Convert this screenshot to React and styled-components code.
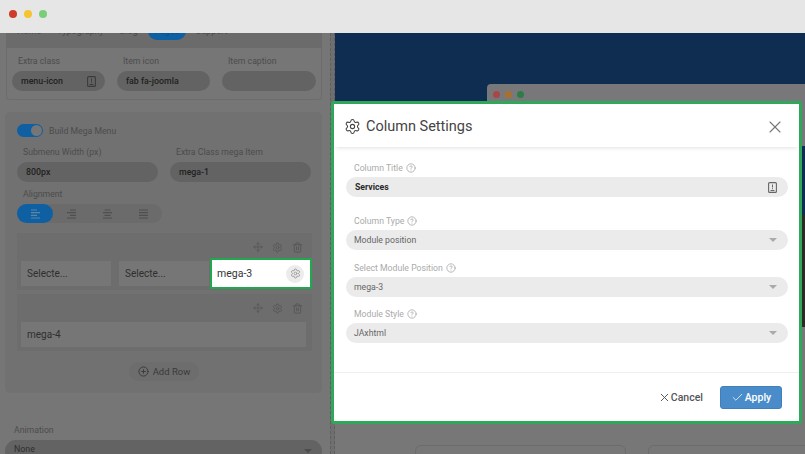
import React from 'react';
import styled, { createGlobalStyle } from 'styled-components';
import { Settings, X, Check, CircleHelp, CirclePlus, Move, Trash2 } from 'lucide-react';

const Global = createGlobalStyle`
    html, body { margin: 0; padding: 0; background: #767676; }
    * { box-sizing: border-box; }
    body { font-family: Roboto, "Liberation Sans", sans-serif; }
`;

const Page = styled.div`
    position: relative;
    width: 805px;
    height: 454px;
    overflow: hidden;
    display: flex;
    flex-direction: column;
`;

const TitleBar = styled.div`
    flex: 0 0 33px;
    display: flex;
    align-items: center;
    gap: 7px;
    padding: 0 0 5px 9px;
    background: #e6e6e6;
    position: relative;
    z-index: 2;
`;

const Dot = styled.span`
    width: ${p => p.$size || 8}px;
    height: ${p => p.$size || 8}px;
    border-radius: 50%;
    background: ${p => p.$color};
`;

const Body = styled.div`
    flex: 1;
    display: flex;
    min-height: 0;
`;

const Sidebar = styled.div`
    flex: 0 0 330px;
    padding: 0 8px 0 5px;
    background: #767676;
    display: flex;
    flex-direction: column;
    overflow: hidden;
    & > * { flex-shrink: 0; }
`;

const Tabs = styled.div`
    height: 15px;
    margin: 0 0 0 1px;
    padding: 0 0 0 11px;
    background: #6b6b6b;
    display: flex;
    align-items: flex-start;
    gap: 16px;
    font-size: 9px;
    color: #4a4a4a;
    overflow: hidden;
`;

const Tab = styled.span`
    height: 9px;
    margin: -2px ${p => (p.$active ? '-6px' : '0')} 0;
    padding: 0 ${p => (p.$active ? '6.5px' : '0')};
    line-height: 0;
    color: ${p => (p.$active ? '#0b4f8a' : '#4a4a4a')};
    background: ${p => (p.$active ? '#0f5fa3' : 'transparent')};
    border-radius: 0 0 14px 14px;
`;

const TopPanel = styled.div`
    height: 52px;
    margin-left: 1px;
    padding: 7px 5px 0;
    display: grid;
    grid-template-columns: 93px 93px 94px;
    column-gap: 12px;
    border: 1px solid #6c6c6c;
    border-top: 0;
    border-radius: 0 0 4px 4px;
`;

const Field = styled.div`
    display: flex;
    flex-direction: column;
    margin-top: ${p => p.$mt || 0}px;
`;

const DimLabel = styled.label`
    height: 16px;
    padding-left: ${p => p.$indent || 6}px;
    font-size: 8.7px;
    line-height: 12px;
    color: #4c4c4c;
`;

const DimInput = styled.div`
    height: 20px;
    border-radius: 10px;
    background: #636363;
    padding: 0 ${p => p.$pad || 9}px;
    display: flex;
    align-items: center;
    justify-content: space-between;
    font-size: 8.8px;
    font-weight: 500;
    color: #1f1f1f;
`;

const MainPanel = styled.div`
    height: 281px;
    margin-top: 12px;
    padding: 12px 11px 0 12px;
    background: #717171;
    border-radius: 5px;
    display: flex;
    flex-direction: column;
    & > * { flex-shrink: 0; }
`;

const ToggleRow = styled.div`
    display: flex;
    align-items: center;
    gap: 6px;
    height: 13px;
    font-size: 8.7px;
    color: #4c4c4c;
`;

const Toggle = styled.span`
    width: 26px;
    height: 13px;
    border-radius: 7px;
    background: #0f5fa3;
    display: flex;
    justify-content: flex-end;
    align-items: center;
    padding-right: 1px;
    &::after {
        content: '';
        width: 11px;
        height: 11px;
        border-radius: 50%;
        background: #767676;
    }
`;

const TwoCols = styled.div`
    margin-top: 9px;
    display: grid;
    grid-template-columns: 141px 141px;
    column-gap: 12px;
`;

const AlignGroup = styled.div`
    width: 145px;
    height: 19px;
    border-radius: 10px;
    background: #6b6b6b;
    display: flex;
`;

const AlignBtn = styled.span`
    flex: 0 0 36px;
    display: flex;
    align-items: center;
    justify-content: center;
    border-radius: 10px;
    color: ${p => (p.$active ? '#5c86a8' : '#4f4f4f')};
    background: ${p => (p.$active ? '#0f5fa3' : 'transparent')};
`;

const RowBox = styled.div`
    width: 295px;
    height: 57px;
    margin-top: ${p => p.$mt}px;
    padding: 4px 6px 4px 4px;
    background: #6d6d6d;
    display: flex;
    flex-direction: column;
`;

const RowTools = styled.div`
    height: 20px;
    margin-bottom: 4px;
    display: flex;
    align-items: center;
    justify-content: flex-end;
    gap: 9px;
    padding-right: 3px;
    color: #575757;
`;

const Cells = styled.div`
    display: flex;
    gap: 8px;
    align-items: center;
    height: 25px;
`;

const Cell = styled.div`
    flex: ${p => (p.$wide ? 1 : '0 0 90px')};
    height: 25px;
    padding-left: 6px;
    background: #767676;
    display: flex;
    align-items: center;
    font-size: 10px;
    color: #2f2f2f;
`;

const ActiveCell = styled.div`
    flex: 0 0 102px;
    height: 31px;
    margin-left: -7px;
    padding: 0 6px 0 5px;
    background: #fff;
    border: 2px solid #21a84f;
    display: flex;
    align-items: center;
    justify-content: space-between;
    font-size: 10.5px;
    color: #333;
`;

const GearBubble = styled.span`
    width: 18px;
    height: 18px;
    border-radius: 50%;
    background: #ececec;
    color: #999;
    display: flex;
    align-items: center;
    justify-content: center;
`;

const AddRow = styled.div`
    align-self: center;
    width: 70px;
    height: 19px;
    margin-top: 11px;
    border-radius: 10px;
    background: #6d6d6d;
    display: flex;
    align-items: center;
    justify-content: center;
    gap: 4px;
    font-size: 9.5px;
    color: #3a3a3a;
`;

const Animation = styled.div`
    margin-top: 31px;
    display: flex;
    flex-direction: column;
`;

const DimSelect = styled.div`
    height: 22px;
    border-radius: 11px;
    background: #636363;
    padding: 0 10px 0 9px;
    display: flex;
    align-items: flex-start;
    justify-content: space-between;
    font-size: 8.8px;
    line-height: 19px;
    color: #2f2f2f;
`;

const Caret = styled.span`
    flex: none;
    align-self: center;
    width: 0;
    height: 0;
    border-left: 4px solid transparent;
    border-right: 4px solid transparent;
    border-top: 4px solid ${p => p.$color || '#aaa'};
`;

const Divider = styled.div`
    flex: 0 0 5px;
    background: #6f6f6f;
    border-left: 1px dashed #5e5e5e;
    border-right: 1px dashed #5e5e5e;
`;

const Preview = styled.div`
    flex: 1;
    background: #777;
    display: flex;
    flex-direction: column;
`;

const Hero = styled.div`
    flex: 0 0 300px;
    padding: 51px 0 0 152px;
    background: #0f2d50;
`;

const InnerWindow = styled.div`
    height: 249px;
    border-radius: 4px 0 0 0;
    background: #78787a;
    overflow: hidden;
`;

const InnerBar = styled.div`
    height: 62px;
    padding: 7px 0 0 6px;
    display: flex;
    gap: 5px;
`;

const InnerBlue = styled.div`
    height: 69px;
    background: #0f2d50;
`;

const InnerPhoto = styled.div`
    height: 112px;
    background: #2b2a24;
`;

const CardRow = styled.div`
    margin-top: 112px;
    padding-left: 80px;
    display: flex;
    gap: 22px;
`;

const GhostCard = styled.div`
    flex: none;
    width: ${p => p.$w}px;
    height: 20px;
    border: 1px solid #6c6c6c;
    border-radius: 6px;
`;

const Modal = styled.div`
    position: absolute;
    left: 331px;
    top: 101px;
    width: 471px;
    height: 323px;
    background: #fff;
    border: 3px solid #2fa85a;
    border-radius: 3px;
    display: flex;
    flex-direction: column;
    z-index: 3;
`;

const ModalHead = styled.div`
    flex: 0 0 43px;
    padding: 2px 14px 0 10px;
    display: flex;
    align-items: center;
    gap: 5px;
    color: #444;
    box-shadow: 0 3px 4px -2px rgba(0, 0, 0, 0.12);
`;

const ModalTitle = styled.h3`
    margin: 0;
    flex: 1;
    font-size: 14.5px;
    font-weight: 400;
`;

const ModalBody = styled.div`
    flex: 0 0 226px;
    padding: 14px 11px 0 12px;
    display: flex;
    flex-direction: column;
    border-bottom: 1px solid #eee;
`;

const FormRow = styled.div`
    margin-bottom: ${p => p.$mb}px;
`;

const FormLabel = styled.label`
    height: 16px;
    padding: 0 0 3px 8px;
    display: flex;
    align-items: center;
    gap: 3px;
    font-size: 8.7px;
    color: #aaa;
`;

const FormControl = styled.div`
    height: 20px;
    border-radius: 10px;
    background: #ebebeb;
    padding: 0 11px 0 ${p => (p.$strong ? 9 : 8)}px;
    display: flex;
    align-items: center;
    justify-content: space-between;
    font-size: 8.7px;
    line-height: 22px;
    font-weight: ${p => (p.$strong ? 700 : 400)};
    color: ${p => (p.$strong ? '#2a2a2a' : '#666')};
`;

const ModalFoot = styled.div`
    flex: 1;
    padding: 0 17px 0 0;
    display: flex;
    align-items: center;
    justify-content: flex-end;
    gap: 17px;
`;

const CancelBtn = styled.span`
    display: flex;
    align-items: center;
    font-size: 10.5px;
    font-weight: 500;
    color: #555;
`;

const ApplyBtn = styled.span`
    width: 62px;
    height: 23px;
    border-radius: 3px;
    background: #4a8cca;
    border: 1px solid #3f7fbd;
    display: flex;
    align-items: center;
    justify-content: center;
    gap: 1px;
    font-size: 10.5px;
    font-weight: 500;
    color: #fff;
`;

const KeyIcon = ({ color }) => (
    <svg width="9" height="11" viewBox="0 0 9 11" fill="none">
        <rect x="0.6" y="0.6" width="7.8" height="9.8" rx="1" stroke={color} strokeWidth="1.1" />
        <path d="M4.5 2.5v3M4.5 6.2v1M2.5 8.5h4" stroke={color} strokeWidth="1" />
    </svg>
);

// four bars, as in the font-awesome align glyphs
const alignBars = {
    left: 'M0 1h6M0 3.7h9M0 6.3h6M0 9h9',
    right: 'M3 1h6M0 3.7h9M3 6.3h6M0 9h9',
    center: 'M1.5 1h6M0 3.7h9M1.5 6.3h6M0 9h9',
    justify: 'M0 1h9M0 3.7h9M0 6.3h9M0 9h9',
};

const AlignIcon = ({ side }) => (
    <svg width="9" height="10" viewBox="0 0 9 10" fill="none" stroke="currentColor" strokeWidth="1.2">
        <path d={alignBars[side]} />
    </svg>
);

const RowToolbar = () => (
    <RowTools>
        <Move size={10} />
        <Settings size={11} />
        <Trash2 size={11} />
    </RowTools>
);

const formFields = [
    { label: 'Column Type', value: 'Module position', mb: 11 },
    { label: 'Select Module Position', value: 'mega-3', mb: 10 },
    { label: 'Module Style', value: 'JAxhtml', mb: 0 },
];

const App = () => (
    <Page>
        <Global />
        <TitleBar>
            <Dot $color="#cf3a2c" />
            <Dot $color="#f5c431" />
            <Dot $color="#78cf78" />
        </TitleBar>
        <Body>
            <Sidebar>
                <Tabs>
                    <Tab>Home</Tab>
                    <Tab>Typography</Tab>
                    <Tab>Blog</Tab>
                    <Tab $active>Pages</Tab>
                    <Tab>Support</Tab>
                </Tabs>
                <TopPanel>
                    <Field>
                        <DimLabel>Extra class</DimLabel>
                        <DimInput>menu-icon <KeyIcon color="#3c3c3c" /></DimInput>
                    </Field>
                    <Field>
                        <DimLabel>Item icon</DimLabel>
                        <DimInput>fab fa-joomla</DimInput>
                    </Field>
                    <Field>
                        <DimLabel>Item caption</DimLabel>
                        <DimInput />
                    </Field>
                </TopPanel>
                <MainPanel>
                    <ToggleRow><Toggle /> Build Mega Menu</ToggleRow>
                    <TwoCols>
                        <Field>
                            <DimLabel>Submenu Width (px)</DimLabel>
                            <DimInput>800px</DimInput>
                        </Field>
                        <Field>
                            <DimLabel>Extra Class mega Item</DimLabel>
                            <DimInput>mega-1</DimInput>
                        </Field>
                    </TwoCols>
                    <Field $mt={6}>
                        <DimLabel>Alignment</DimLabel>
                        <AlignGroup>
                            <AlignBtn $active><AlignIcon side="left" /></AlignBtn>
                            <AlignBtn><AlignIcon side="right" /></AlignBtn>
                            <AlignBtn><AlignIcon side="center" /></AlignBtn>
                            <AlignBtn><AlignIcon side="justify" /></AlignBtn>
                        </AlignGroup>
                    </Field>
                    <RowBox $mt={10}>
                        <RowToolbar />
                        <Cells>
                            <Cell>Selecte...</Cell>
                            <Cell>Selecte...</Cell>
                            <ActiveCell>
                                mega-3
                                <GearBubble><Settings size={11} /></GearBubble>
                            </ActiveCell>
                        </Cells>
                    </RowBox>
                    <RowBox $mt={4}>
                        <RowToolbar />
                        <Cells><Cell $wide>mega-4</Cell></Cells>
                    </RowBox>
                    <AddRow><CirclePlus size={11} /> Add Row</AddRow>
                </MainPanel>
                <Animation>
                    <DimLabel $indent={9}>Animation</DimLabel>
                    <DimSelect>None <Caret $color="#4c4c4c" /></DimSelect>
                </Animation>
            </Sidebar>
            <Divider />
            <Preview>
                <Hero>
                    <InnerWindow>
                        <InnerBar>
                            <Dot $color="#a8474a" $size={7} />
                            <Dot $color="#a8702f" $size={7} />
                            <Dot $color="#2e7d46" $size={7} />
                        </InnerBar>
                        <InnerBlue />
                        <InnerPhoto />
                    </InnerWindow>
                </Hero>
                <CardRow>
                    <GhostCard $w={211} />
                    <GhostCard $w={170} />
                </CardRow>
            </Preview>
        </Body>
        <Modal>
            <ModalHead>
                <Settings size={17} strokeWidth={1.5} />
                <ModalTitle>Column Settings</ModalTitle>
                <X size={20} strokeWidth={1.3} color="#777" />
            </ModalHead>
            <ModalBody>
                <FormRow $mb={17}>
                    <FormLabel>Column Title <CircleHelp size={10} /></FormLabel>
                    <FormControl $strong>Services <KeyIcon color="#666" /></FormControl>
                </FormRow>
                {formFields.map(f => (
                    <FormRow key={f.label} $mb={f.mb}>
                        <FormLabel>{f.label} <CircleHelp size={10} /></FormLabel>
                        <FormControl>{f.value} <Caret /></FormControl>
                    </FormRow>
                ))}
            </ModalBody>
            <ModalFoot>
                <CancelBtn><X size={13} strokeWidth={1.8} /> Cancel</CancelBtn>
                <ApplyBtn><Check size={13} strokeWidth={1.4} /> Apply</ApplyBtn>
            </ModalFoot>
        </Modal>
    </Page>
);

export default App;
